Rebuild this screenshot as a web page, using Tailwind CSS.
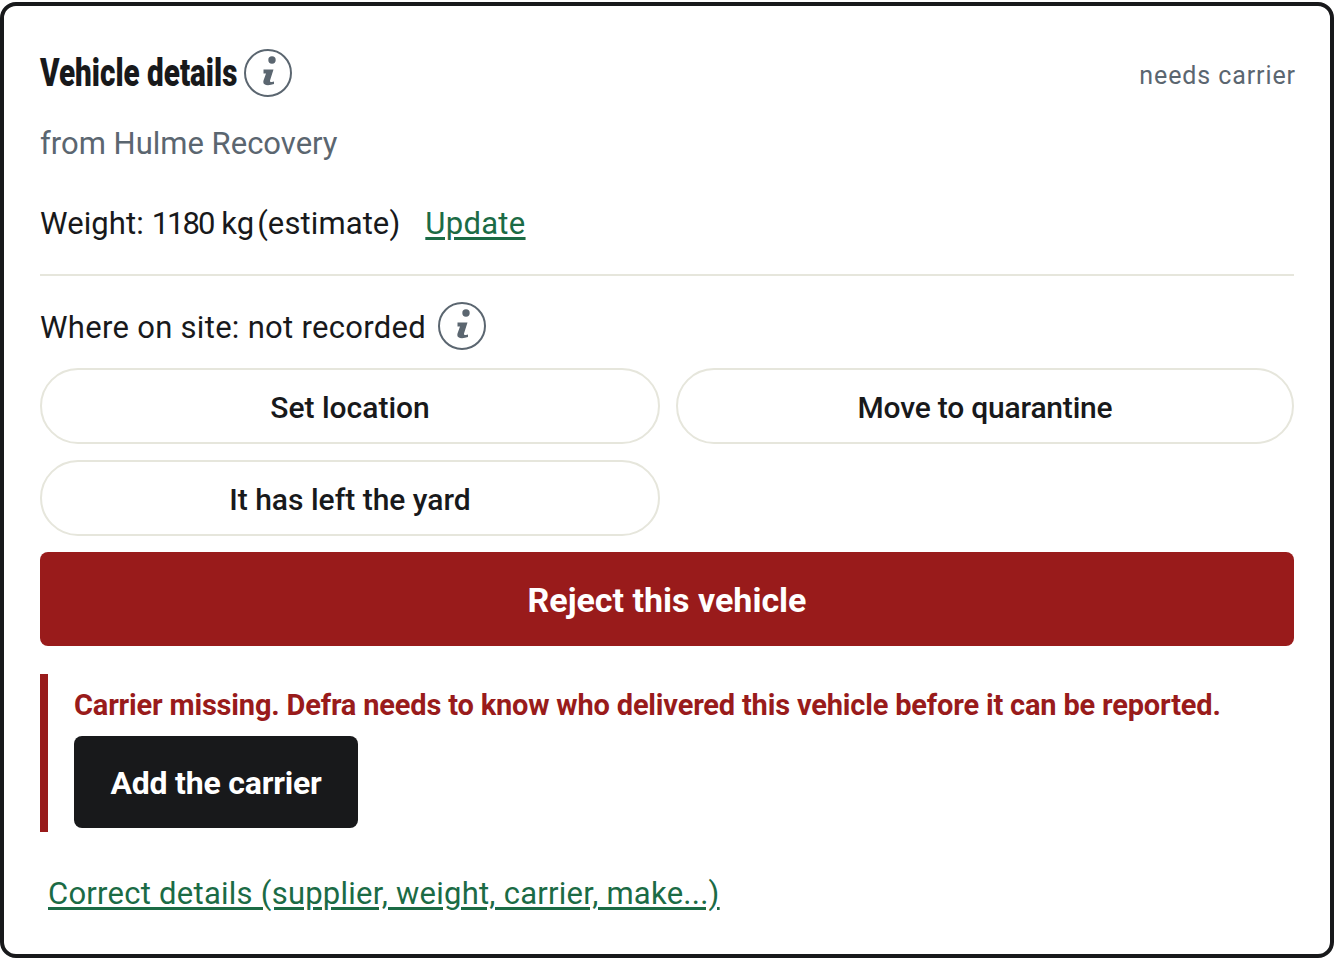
<!DOCTYPE html>
<html lang="en">
<head>
  <meta charset="UTF-8" />
  <title>Vehicle details</title>
  <script src="https://cdn.jsdelivr.net/npm/@tailwindcss/browser@4"></script>
</head>
<body class="bg-white font-['Roboto',sans-serif] text-[#18191b]">
  <div class="mt-[2px] w-[1334px] h-[956px] border-[4px] border-[#18191b] rounded-[16px] bg-white px-[36px] pt-[42px] overflow-hidden">
    <!-- Header -->
    <div class="flex justify-between items-center h-[50px]">
      <div class="flex items-center gap-[7px]">
        <h2 class="w-[197px] whitespace-nowrap text-[38px] font-black leading-none origin-left scale-x-[0.78]">Vehicle details</h2>
        <svg class="w-[48px] h-[48px]" viewBox="0 0 48 48" fill="none"><circle cx="24" cy="24" r="23" stroke="#5b6670" stroke-width="2"/><circle cx="28" cy="11" r="3.7" fill="#5b6670"/><path d="M19.5 20.5H29.5L26 31.5Q25.5 33.5 28 33L30 32.5V35Q26 36.5 22 36Q18.5 35 19.5 31.5L22 24.5H19.5Z" fill="#5b6670"/></svg>
      </div>
      <span class="text-[25px] text-[#5b6670] tracking-[0.9px] mt-[6px] mr-[-2px]">needs carrier</span>
    </div>
    <p class="text-[31px] text-[#5b6670] mt-[28px] leading-[36px]">from Hulme Recovery</p>
    <div class="flex gap-[25px] mt-[44px] text-[31px] leading-[36px]">
      <span class="tracking-[0.1px]">Weight: <span class="tracking-[-2px]">1180</span> kg<span class="ml-[3px]">(estimate)</span></span>
      <a class="text-[#1b6b45] underline underline-offset-3 tracking-[0.3px]">Update</a>
    </div>
    <div class="border-t-2 border-[#e6e6dc] mt-[32px]"></div>
    <div class="flex items-center gap-[13px] mt-[26px] text-[31px]">
      <span class="tracking-[0.3px] translate-y-[2px]">Where on site: not recorded</span>
      <svg class="w-[48px] h-[48px] -ml-[1px]" viewBox="0 0 48 48" fill="none"><circle cx="24" cy="24" r="23" stroke="#5b6670" stroke-width="2"/><circle cx="28" cy="11" r="3.7" fill="#5b6670"/><path d="M19.5 20.5H29.5L26 31.5Q25.5 33.5 28 33L30 32.5V35Q26 36.5 22 36Q18.5 35 19.5 31.5L22 24.5H19.5Z" fill="#5b6670"/></svg>
    </div>
    <div class="grid grid-cols-[620px_1fr] gap-[16px] mt-[18px]">
      <button class="h-[76px] pt-[3px] rounded-full border-2 border-[#e6e6dc] text-[30px] font-medium">Set location</button>
      <button class="h-[76px] pt-[3px] rounded-full border-2 border-[#e6e6dc] text-[30px] font-medium tracking-[-0.2px]">Move to quarantine</button>
      <button class="h-[76px] pt-[3px] rounded-full border-2 border-[#e6e6dc] text-[30px] font-medium">It has left the yard</button>
    </div>
    <button class="w-full h-[94px] pt-[2px] mt-[16px] rounded-[8px] bg-[#991b1b] text-white text-[34px] font-bold">Reject this vehicle</button>
    <div class="mt-[28px] border-l-[8px] border-[#991b1b] pl-[26px] h-[158px]">
      <p class="text-[#991b1b] text-[29px] font-bold leading-[62px] tracking-[-0.18px]">Carrier missing. Defra needs to know who delivered this vehicle before it can be reported.</p>
      <button class="w-[284px] h-[92px] pt-[2px] rounded-[8px] bg-[#18191b] text-white text-[32px] font-bold tracking-[-0.2px]">Add the carrier</button>
    </div>
    <a class="block ml-[8px] mt-[39px] text-[31px] text-[#1b6b45] underline underline-offset-3 tracking-[0.25px]">Correct details (supplier, weight, carrier, make...)</a>
  </div>
</body>
</html>
